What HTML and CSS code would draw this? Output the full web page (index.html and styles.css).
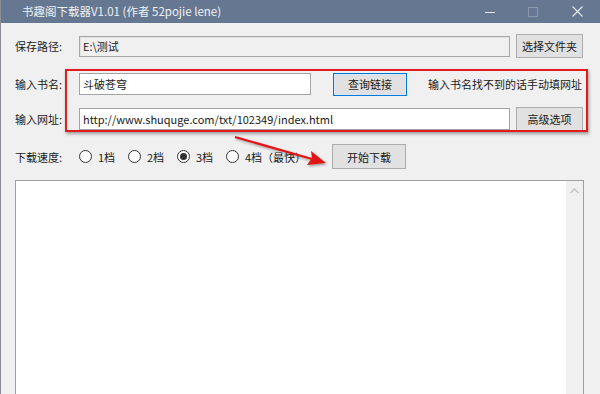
FILE: index.html
```html
<!DOCTYPE html>
<html lang="zh-CN">
<head>
    <meta charset="UTF-8">
    <meta name="viewport" content="width=device-width, initial-scale=1.0">
    <title>书趣阁下载器V1.01</title>
    <link rel="stylesheet" href="styles.css">
</head>
<body>
    <div class="window">
        <div class="titlebar">
            <span class="title">书趣阁下载器V1.01 (作者 52pojie lene)</span>
            <div class="controls">
                <span class="ctl">
                    <svg width="10" height="10" viewBox="0 0 10 10"><line x1="0" y1="5.5" x2="10" y2="5.5" stroke="#e6eaef" stroke-width="1"/></svg>
                </span>
                <span class="ctl">
                    <svg width="10" height="10" viewBox="0 0 10 10"><rect x="0.5" y="0.5" width="9" height="9" fill="none" stroke="#8a98aa" stroke-width="1"/></svg>
                </span>
                <span class="ctl">
                    <svg width="11" height="11" viewBox="0 0 11 11"><path d="M0.5 0.5 L10.5 10.5 M10.5 0.5 L0.5 10.5" stroke="#e6eaef" stroke-width="1.1"/></svg>
                </span>
            </div>
        </div>

        <div class="content">
            <div class="row row-path">
                <span class="label">保存路径:</span>
                <div class="field readonly">E:\测试</div>
                <button class="btn btn-side">选择文件夹</button>
            </div>

            <div class="row row-name">
                <span class="label">输入书名:</span>
                <div class="field name-field">斗破苍穹</div>
                <button class="btn btn-query focused">查询链接</button>
                <span class="hint">输入书名找不到的话手动填网址</span>
            </div>

            <div class="row row-url">
                <span class="label">输入网址:</span>
                <div class="field url-field">http://www.shuquge.com/txt/102349/index.html</div>
                <button class="btn btn-side">高级选项</button>
            </div>

            <div class="row row-speed">
                <span class="label">下载速度:</span>
                <div class="radios">
                    <label class="radio"><span class="dot"></span>1档</label>
                    <label class="radio"><span class="dot"></span>2档</label>
                    <label class="radio checked"><span class="dot"></span>3档</label>
                    <label class="radio last"><span class="dot"></span>4档（最快）</label>
                </div>
                <button class="btn btn-start">开始下载</button>
            </div>

            <div class="log">
                <div class="log-body"></div>
                <div class="scrollbar">
                    <svg width="9" height="6" viewBox="0 0 9 6"><path d="M0.5 5 L4.5 1 L8.5 5" fill="none" stroke="#c2c2c2" stroke-width="1.3"/></svg>
                </div>
            </div>
        </div>

        <!-- annotation overlays -->
        <div class="red-frame"></div>
        <svg class="arrow" width="110" height="40" viewBox="0 0 110 40">
            <defs>
                <filter id="sh" x="-20%" y="-50%" width="140%" height="200%">
                    <feDropShadow dx="1" dy="1.5" stdDeviation="1" flood-color="#000" flood-opacity="0.35"/>
                </filter>
            </defs>
            <g filter="url(#sh)">
                <path d="M3 3 L80 25" stroke="#e01818" stroke-width="2.2" fill="none"/>
                <path d="M94 29 L75 31 L80 24 L79 17 Z" fill="#e01818"/>
            </g>
        </svg>
    </div>
</body>
</html>
```

FILE: styles.css
```css
html, body {
    margin: 0;
    padding: 0;
    overflow: hidden;
}
body {
    font-family: "Noto Sans CJK SC", "Noto Sans", sans-serif;
    font-size: 11px;
    color: #1a1a1a;
    background: #f0f0f0;
}
.window {
    position: relative;
    width: 600px;
    height: 394px;
    background: #f0f0f0;
    border-left: 1px solid #8d8f96;
    box-sizing: border-box;
}
.titlebar {
    height: 23px;
    background: #667891;
    display: flex;
    align-items: center;
    justify-content: space-between;
}
.title {
    color: #eef1f5;
    padding-left: 21px;
    font-size: 11.5px;
    line-height: 23px;
}
.controls {
    display: flex;
    height: 23px;
}
.ctl {
    width: 43px;
    display: flex;
    align-items: center;
    justify-content: center;
}
.ctl:last-child {
    width: 46px;
}
.content {
    padding: 11px 0 0 14px;
}
.row {
    display: flex;
    align-items: center;
}
.label {
    width: 64px;
    flex-shrink: 0;
}
.field {
    box-sizing: border-box;
    height: 22px;
    line-height: 20px;
    border: 1px solid #a3a3a3;
    background: #fff;
    padding: 0 3px;
    white-space: nowrap;
}
.readonly {
    width: 431px;
    background: #f0f0f0;
    border-color: #a8a8a8;
    box-shadow: inset 1px 1px 0 #e2e2e2;
    height: 21px;
    line-height: 19px;
}
.btn {
    font-family: inherit;
    font-size: 11px;
    color: #1a1a1a;
    background: #e1e1e1;
    border: 1px solid #adadad;
    box-sizing: border-box;
    padding: 0;
    margin: 0;
}
.btn-side {
    width: 67px;
    height: 24px;
    margin-left: 6px;
}
.row-path {
    height: 24px;
}
.row-name {
    margin-top: 14px;
    height: 24px;
}
.name-field {
    width: 232px;
}
.btn-query {
    width: 74px;
    height: 23px;
    margin-left: 22px;
}
.focused {
    border: 1px solid #0078d7;
    box-shadow: inset 0 0 0 1px #d6e8f7;
}
.hint {
    margin-left: 21px;
}
.row-url {
    margin-top: 11px;
    height: 24px;
}
.url-field {
    width: 431px;
    height: 22px;
}
.row-speed {
    margin-top: 13px;
    height: 25px;
}
.radios {
    display: flex;
    width: 253px;
}
.radio {
    display: flex;
    align-items: center;
    width: 49px;
}
.radio.last {
    width: auto;
}
.dot {
    box-sizing: border-box;
    width: 13px;
    height: 13px;
    border: 1px solid #333;
    border-radius: 50%;
    background: #fff;
    margin-right: 6px;
    display: flex;
    align-items: center;
    justify-content: center;
}
.checked .dot::after {
    content: "";
    width: 7px;
    height: 7px;
    border-radius: 50%;
    background: #333;
}
.btn-start {
    width: 74px;
    height: 25px;
}
.log {
    margin-top: 11px;
    width: 569px;
    height: 230px;
    box-sizing: border-box;
    border: 1px solid #a0a0a0;
    background: #fff;
    display: flex;
}
.log-body {
    flex: 1;
}
.scrollbar {
    width: 17px;
    background: #f0f0f0;
    display: flex;
    justify-content: center;
    padding-top: 7px;
    box-sizing: border-box;
}
.red-frame {
    position: absolute;
    left: 64px;
    top: 69px;
    width: 519px;
    height: 59px;
    border: 2.5px solid #e01c1c;
    box-shadow: 1px 2px 3px rgba(0, 0, 0, 0.35);
}
.arrow {
    position: absolute;
    left: 231px;
    top: 134px;
}
```
